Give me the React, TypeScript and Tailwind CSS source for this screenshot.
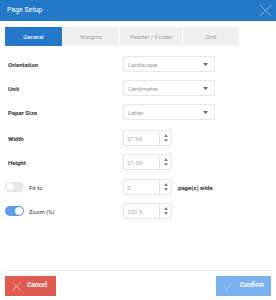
import React from 'react';

const Select = ({ value }: { value: string }) => (
  <div className="w-[92px] h-[16px] border border-[#e6e6e6] bg-white flex items-center justify-between pl-[4px] pr-[6px] text-[6px] text-[#9a9a9a]">
    <span>{value}</span>
    <svg width="5" height="3" viewBox="0 0 5 3"><path d="M0 0h5L2.5 3z" fill="#666" /></svg>
  </div>
);

const Spin = ({ value }: { value: string }) => (
  <div className="w-[49px] h-[16px] border border-[#e6e6e6] bg-white flex text-[6px] text-[#a8a8a8]">
    <div className="flex-1 flex items-center pl-[3px] border-r border-[#e6e6e6]">{value}</div>
    <div className="w-[11px] flex flex-col items-center justify-center gap-[2px]">
      <svg width="4" height="3" viewBox="0 0 4 3"><path d="M0 3h4L2 0z" fill="#888" /></svg>
      <svg width="4" height="3" viewBox="0 0 4 3"><path d="M0 0h4L2 3z" fill="#888" /></svg>
    </div>
  </div>
);

const Toggle = ({ on }: { on: boolean }) => (
  <div className={`w-[19px] h-[10px] rounded-full flex items-center px-[1px] ${on ? 'bg-[#5b9bea] justify-end' : 'bg-[#e8e8e8] justify-start'}`}>
    <div className="w-[8px] h-[8px] rounded-full bg-white shadow-[0_0_1px_rgba(0,0,0,0.3)]" />
  </div>
);

const Row = ({ label, children, className = '' }: { label: React.ReactNode; children: React.ReactNode; className?: string }) => (
  <div className={`flex items-center h-[16px] ${className}`}>
    <div className="w-[123px] pl-[8px] text-[6px] font-bold text-[#333]">{label}</div>
    {children}
  </div>
);

export default function App() {
  const tabs = ['General', 'Margins', 'Header / Footer', 'Grid'];
  return (
    <div className="w-[276px] h-[300px] bg-white flex flex-col font-['Roboto',sans-serif]">
      {/* Header */}
      <div className="h-[21px] bg-[#2378c9] flex items-center justify-between pl-[7px] pr-[4px] shrink-0">
        <span className="text-[7px] text-white">Page Setup</span>
        <svg width="13" height="13" viewBox="0 0 13 13"><path d="M1 1l11 11M12 1L1 12" stroke="#c9dcf1" strokeWidth="0.6" /></svg>
      </div>

      {/* Tabs */}
      <div className="flex gap-[1px] px-[5px] mt-[6px]">
        {tabs.map((t, i) => (
          <div
            key={t}
            className={`h-[19px] flex items-center justify-center text-[6px] ${i === 0 ? 'w-[57px] bg-[#2378c9] text-white' : 'bg-[#efefef] text-[#a5a5a5]'} ${i === 1 ? 'w-[56px]' : ''} ${i === 2 ? 'w-[62px]' : ''} ${i === 3 ? 'w-[56px]' : ''}`}
          >
            {t}
          </div>
        ))}
      </div>

      {/* Content */}
      <div className="flex flex-col mt-[10px] gap-[8px]">
        <Row label="Orientation"><Select value="Landscape" /></Row>
        <Row label="Unit"><Select value="Centimetre" /></Row>
        <Row label="Paper Size"><Select value="Letter" /></Row>
        <Row label="Width" className="mt-[2px]"><Spin value="27.94" /></Row>
        <Row label="Height"><Spin value="21.59" /></Row>
        <div className="flex items-center h-[16px] mt-[1px]">
          <div className="w-[123px] pl-[5px] flex items-center gap-[5px] text-[6px] text-[#333]">
            <Toggle on={false} />
            <span>Fit to</span>
          </div>
          <Spin value="0" />
          <span className="ml-[6px] text-[6px] font-bold text-[#333]">page(s) wide</span>
        </div>
        <div className="flex items-center h-[16px]">
          <div className="w-[123px] pl-[5px] flex items-center gap-[5px] text-[6px] text-[#333]">
            <Toggle on={true} />
            <span>Zoom (%)</span>
          </div>
          <Spin value="100 %" />
        </div>
      </div>

      <div className="flex-1" />

      {/* Footer */}
      <div className="mx-[5px] border-t border-[#e8ebf0]" />
      <div className="flex justify-between px-[5px] pt-[5px] pb-[4px]">
        <button className="w-[51px] h-[20px] bg-[#e05a4f] flex items-center gap-[6px] pl-[7px] text-[6.5px] font-bold text-white">
          <svg width="9" height="9" viewBox="0 0 9 9"><path d="M0.5 0.5l8 8M8.5 0.5l-8 8" stroke="#f6c9c4" strokeWidth="0.7" /></svg>
          Cancel
        </button>
        <button className="w-[55px] h-[20px] bg-[#7ab1ef] flex items-center gap-[7px] pl-[7px] text-[6.5px] font-bold text-white">
          <svg width="10" height="8" viewBox="0 0 10 8"><path d="M0.5 4.5l3 3 6-7" stroke="#d4e5fa" strokeWidth="0.7" fill="none" /></svg>
          Confirm
        </button>
      </div>
    </div>
  );
}
